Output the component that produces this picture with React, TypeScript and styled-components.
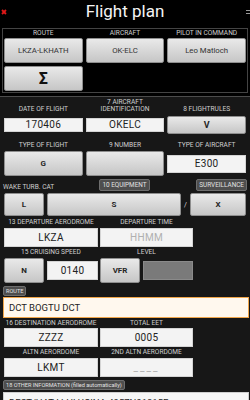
import React from 'react';
import styled, { createGlobalStyle } from 'styled-components';

const GlobalStyle = createGlobalStyle`
  html, body {
    margin: 0;
    padding: 0;
    background: #000;
    overflow: hidden;
  }
  body {
    font-family: Roboto, 'Liberation Sans', sans-serif;
  }
  * {
    box-sizing: border-box;
  }
`;

export default function App() {
  return (
    <>
      <GlobalStyle />
      <Header>
        <CloseIcon viewBox="0 0 6 6">
          <path d="M1 1 L5 5 M5 1 L1 5" />
        </CloseIcon>
        <Title>Flight plan</Title>
        <MenuIcon>
          <span />
          <span />
        </MenuIcon>
      </Header>

      <TopPanel>
        <Grid3>
          <Label $h={9}>ROUTE</Label>
          <Label $h={9}>AIRCRAFT</Label>
          <Label $h={9}>PILOT IN COMMAND</Label>
        </Grid3>
        <Grid3 $gapY={3}>
          <Button $h={25}>LKZA-LKHATH</Button>
          <Button $h={25}>OK-ELC</Button>
          <Button $h={25}>Leo Matloch</Button>
          <SigmaButton $h={25}>Σ</SigmaButton>
        </Grid3>
      </TopPanel>

      <Main>
        <Grid3 $h={18} $align="end">
          <Label>DATE OF FLIGHT</Label>
          <Label>
            7 AIRCRAFT
            <br />
            IDENTIFICATION
          </Label>
          <Label>8 FLIGHTRULES</Label>
        </Grid3>
        <Grid3 $h={19}>
          <Field $h={14}>170406</Field>
          <Field $h={14}>OKELC</Field>
          <Button $h={18} $size={9}>V</Button>
        </Grid3>

        <Grid3 $h={17} $align="end">
          <Label>TYPE OF FLIGHT</Label>
          <Label>9 NUMBER</Label>
          <Label>TYPE OF AIRCRAFT</Label>
        </Grid3>
        <Grid3 $h={25}>
          <Button $h={25} $size={8}>G</Button>
          <Button $h={25} />
          <Field $h={18}>E300</Field>
        </Grid3>

        <TagRow>
          <SideLabel>WAKE TURB. CAT</SideLabel>
          <Tag>10 EQUIPMENT</Tag>
          <Tag $end>SURVEILLANCE</Tag>
        </TagRow>
        <EquipRow>
          <Button $h={23} $size={8}>L</Button>
          <Button $h={23} $size={8}>S</Button>
          <Slash>/</Slash>
          <Button $h={23} $size={8}>X</Button>
        </EquipRow>

        <HalfGrid $h={12}>
          <Label>13 DEPARTURE AERODROME</Label>
          <Label>DEPARTURE TIME</Label>
        </HalfGrid>
        <HalfGrid $h={19}>
          <Field $h={19}>LKZA</Field>
          <Field $h={19} $placeholder>HHMM</Field>
        </HalfGrid>

        <HalfGrid $h={11}>
          <Label>15 CRUISING SPEED</Label>
          <Label>LEVEL</Label>
        </HalfGrid>
        <HalfGrid $h={25}>
          <Pair>
            <Button $h={25} $size={8}>N</Button>
            <Field $h={19}>0140</Field>
          </Pair>
          <Pair>
            <Button $h={25} $size={8}>VFR</Button>
            <DisabledField />
          </Pair>
        </HalfGrid>

        <TagRow $h={14} $pad={1}>
          <Tag $small>ROUTE</Tag>
        </TagRow>
        <WideField>DCT BOGTU DCT</WideField>

        <HalfGrid $h={10}>
          <Label>16 DESTINATION AERODROME</Label>
          <Label>TOTAL EET</Label>
        </HalfGrid>
        <HalfGrid $h={19}>
          <Field $h={19}>ZZZZ</Field>
          <Field $h={19}>0005</Field>
        </HalfGrid>

        <HalfGrid $h={11}>
          <Label>ALTN AERORDOME</Label>
          <Label>2ND ALTN AERORDOME</Label>
        </HalfGrid>
        <HalfGrid $h={19}>
          <Field $h={19}>LKMT</Field>
          <Field $h={19} $placeholder $spaced>____</Field>
        </HalfGrid>

        <TagRow $h={14} $pad={1}>
          <Tag $small>18 OTHER INFORMATION (filled automatically)</Tag>
        </TagRow>
        <OtherField>DEST/HAT I LHLUCINA 4957N01815E</OtherField>
      </Main>
    </>
  );
}

const Header = styled.header`
  height: 28px;
  display: grid;
  grid-template-columns: 20px 1fr 20px;
  align-items: start;
`;

const Title = styled.h1`
  margin: 0;
  text-align: center;
  color: #f4f4f4;
  font-size: 17px;
  font-weight: 400;
  line-height: 23px;
`;

const CloseIcon = styled.svg`
  width: 6px;
  height: 6px;
  margin: 9px 0 0 1px;
  stroke: #e01818;
  stroke-width: 1.8;
  fill: none;
`;

const MenuIcon = styled.div`
  justify-self: end;
  display: flex;
  flex-direction: column;
  gap: 2px;
  margin-top: 10px;

  span {
    display: block;
    width: 4px;
    height: 1px;
    background: #9a9a9a;
  }
`;

const TopPanel = styled.section`
  margin: 0 2px;
  border: 1px solid #444;
  padding: 0 1px 1px;
`;

const Grid3 = styled.div<{ $h?: number; $gapY?: number; $align?: string }>`
  display: grid;
  grid-template-columns: repeat(3, 1fr);
  column-gap: 3px;
  row-gap: ${(p) => p.$gapY ?? 0}px;
  align-items: ${(p) => p.$align ?? 'center'};
  height: ${(p) => (p.$h ? `${p.$h}px` : 'auto')};
  padding-bottom: ${(p) => (p.$align === 'end' ? '2px' : '0')};
`;

const HalfGrid = styled.div<{ $h: number }>`
  display: grid;
  grid-template-columns: 94px 93px;
  column-gap: 2px;
  align-items: center;
  height: ${(p) => p.$h}px;
`;

const Label = styled.div<{ $h?: number }>`
  text-align: center;
  color: #cfcfcf;
  font-size: 6.6px;
  line-height: ${(p) => (p.$h ? `${p.$h}px` : '7px')};
  white-space: nowrap;
`;

const Button = styled.div<{ $h: number; $size?: number }>`
  height: ${(p) => p.$h}px;
  display: flex;
  align-items: center;
  justify-content: center;
  background: linear-gradient(#e9e9e9, #c6c6c6);
  border: 1px solid #8e8e8e;
  border-radius: 2px;
  color: ${(p) => (p.$size ? '#262626' : '#333')};
  font-size: ${(p) => p.$size ?? 7.8}px;
  font-weight: ${(p) => (p.$size ? 700 : 400)};
`;

const SigmaButton = styled(Button)`
  font-size: 16px;
  font-weight: 700;
  color: #111;
`;

const Field = styled.div<{ $h: number; $placeholder?: boolean; $spaced?: boolean }>`
  height: ${(p) => p.$h}px;
  display: flex;
  align-items: center;
  justify-content: center;
  background: #f3f3f3;
  border: 1px solid #d4d4d4;
  color: ${(p) => (p.$placeholder ? '#b0b0b0' : '#222')};
  font-size: 10px;
  letter-spacing: ${(p) => (p.$spaced ? '2px' : '0.3px')};
`;

const DisabledField = styled.div`
  height: 19px;
  background: #7a7a7a;
  border: 1px solid #8a8a8a;
`;

const Main = styled.main`
  margin-top: 3px;
  background: #171717;
  border-top: 1px solid #4c4c4c;
  padding: 0 4px;
`;

const TagRow = styled.div<{ $h?: number; $pad?: number }>`
  height: ${(p) => p.$h ?? 17}px;
  display: grid;
  grid-template-columns: repeat(3, 1fr);
  column-gap: 3px;
  align-items: end;
  padding-bottom: ${(p) => p.$pad ?? 2}px;
  margin-left: -1px;
`;

const SideLabel = styled.div`
  color: #cfcfcf;
  font-size: 6.6px;
  line-height: 8px;
  white-space: nowrap;
`;

const Tag = styled.div<{ $end?: boolean; $small?: boolean }>`
  justify-self: ${(p) => (p.$end ? 'end' : p.$small ? 'start' : 'center')};
  height: ${(p) => (p.$small ? 10 : 12)}px;
  display: flex;
  align-items: center;
  padding: 0 2px;
  background: #4e4e4e;
  border: 1px solid #6e6e6e;
  border-radius: 2px;
  color: #e2e2e2;
  font-size: ${(p) => (p.$small ? 5.6 : 6.4)}px;
  white-space: nowrap;
  margin-right: ${(p) => (p.$end ? '-1px' : '0')};
  grid-column: ${(p) => (p.$small ? '1 / -1' : 'auto')};
`;

const EquipRow = styled.div`
  height: 23px;
  display: grid;
  grid-template-columns: 42px 134px 7px 1fr;
  column-gap: 1px;
  align-items: center;

  & > :first-child {
    margin-right: 2px;
  }
`;

const Slash = styled.div`
  text-align: center;
  color: #ddd;
  font-size: 7px;
`;

const Pair = styled.div`
  display: grid;
  grid-template-columns: 40px 1fr;
  column-gap: 3px;
  align-items: center;
`;

const WideField = styled.div`
  height: 21px;
  margin: 0 -3px 0 -1px;
  display: flex;
  align-items: center;
  padding-left: 5px;
  background: #fff8ee;
  border: 1.5px solid #f0a64a;
  color: #1e1e1e;
  font-size: 9.5px;
`;

const OtherField = styled.div`
  height: 21px;
  margin: 1px -3px 0 -1px;
  display: flex;
  align-items: center;
  padding-left: 5px;
  background: #f6f6f6;
  border: 1px solid #cfcfcf;
  color: #1e1e1e;
  font-size: 9.5px;
`;
